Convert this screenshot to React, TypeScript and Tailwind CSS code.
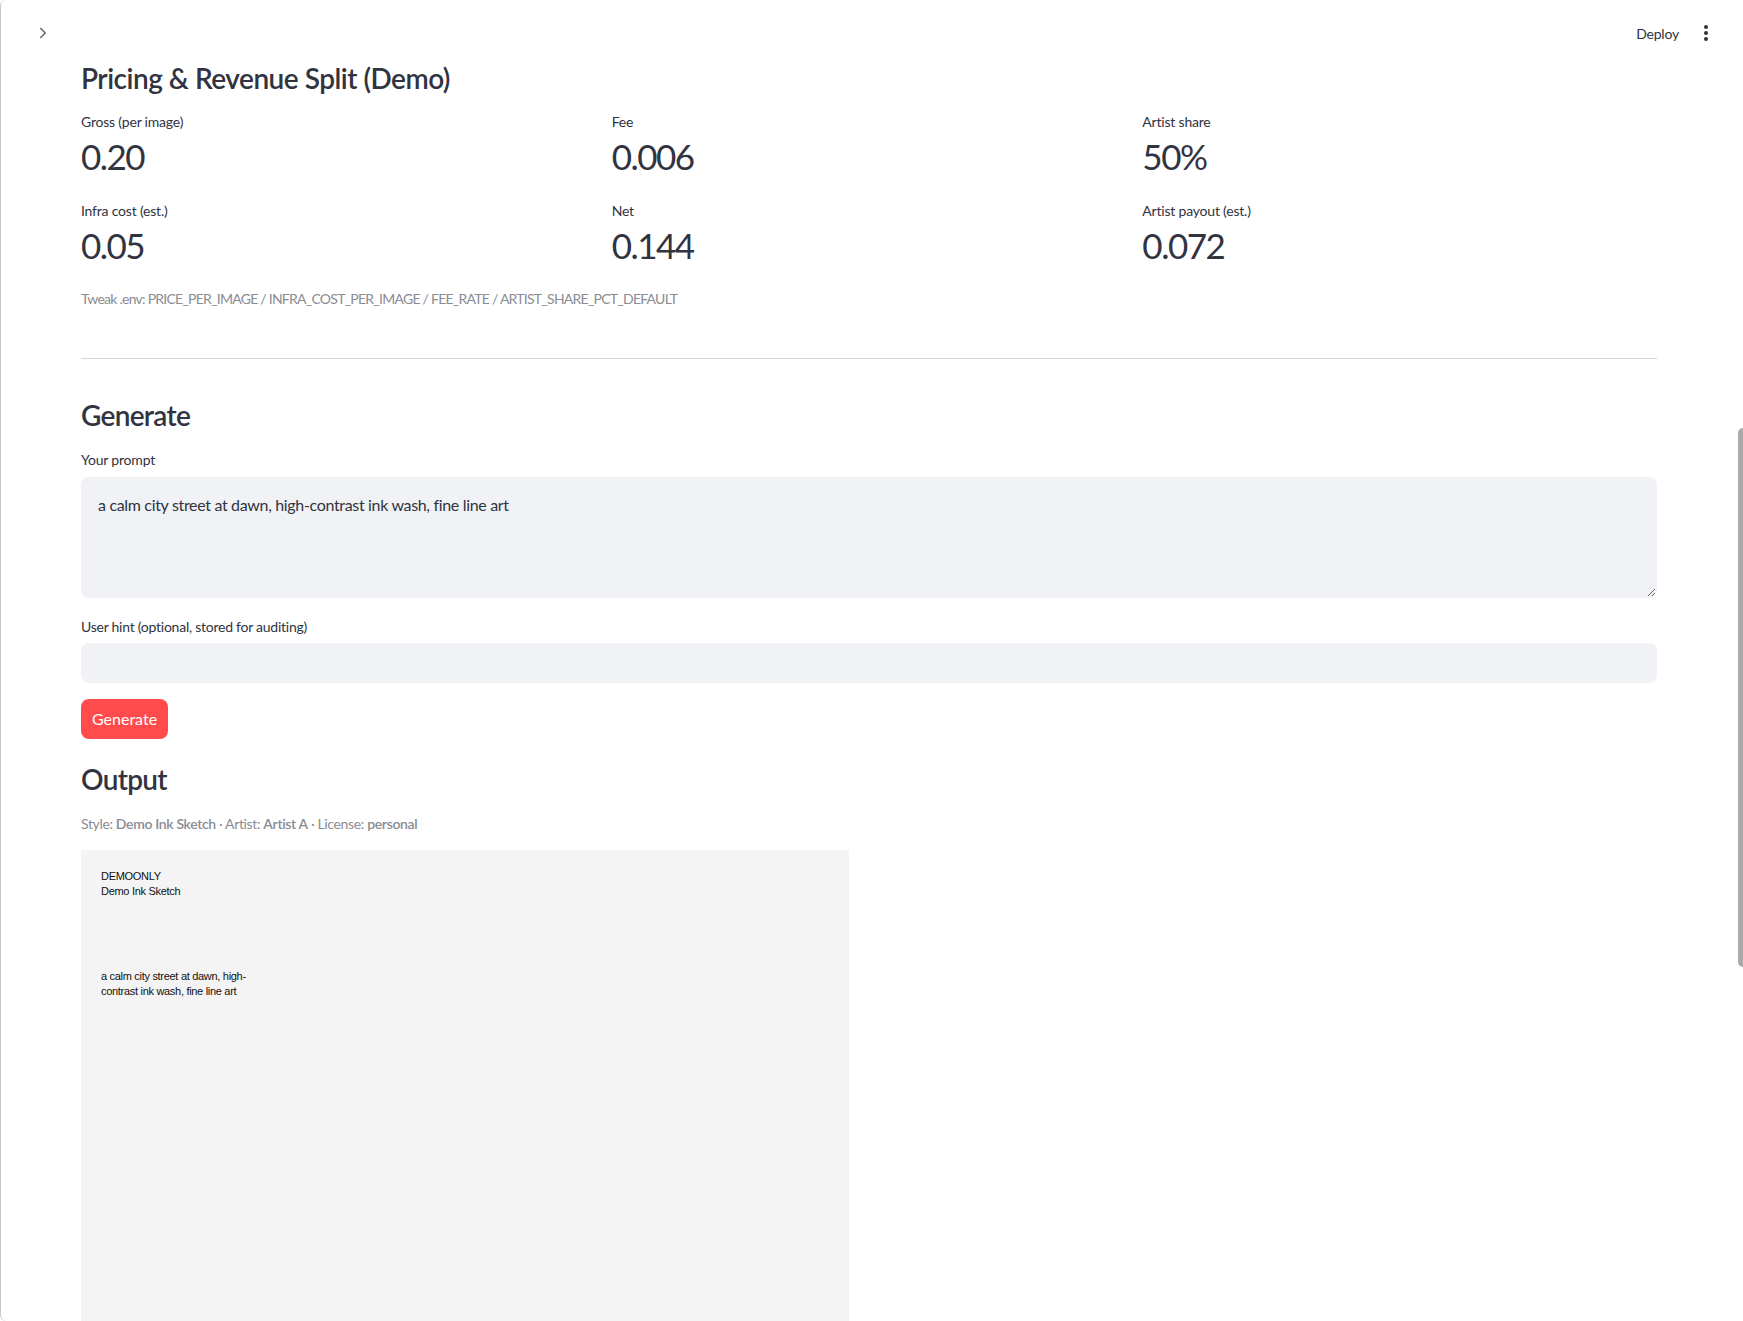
import React from 'react';
import { ChevronRight } from 'lucide-react';

const font = { fontFamily: 'Lato, "Noto Sans", sans-serif' };

const metrics = [
  { label: 'Gross (per image)', value: '0.20' },
  { label: 'Fee', value: '0.006' },
  { label: 'Artist share', value: '50%' },
  { label: 'Infra cost (est.)', value: '0.05' },
  { label: 'Net', value: '0.144' },
  { label: 'Artist payout (est.)', value: '0.072' },
];

const Metric: React.FC<{ label: string; value: string }> = ({ label, value }) => (
  <div className="flex flex-col">
    <div className="text-[14px] leading-[20px] tracking-[-0.2px] text-[#31333f]">{label}</div>
    <div className="mt-[2px] text-[35px] leading-[44px] tracking-[-1.5px] text-[#31333f]">{value}</div>
  </div>
);

const App: React.FC = () => {
  return (
    <div
      className="relative h-[1321px] overflow-hidden bg-white border-l border-[#c8c8c8] rounded-l-[6px] text-[#31333f]"
      style={font}
    >
      {/* top bar */}
      <header className="absolute top-0 left-0 right-0 h-[66px] flex items-center justify-between pl-[33px] pr-[34px]">
        <ChevronRight className="w-[18px] h-[18px] text-[#6b6d76]" strokeWidth={2.2} />
        <div className="flex items-center gap-[24px]">
          <span className="text-[14px] tracking-[-0.2px] text-[#31333f]">Deploy</span>
          <svg width="6" height="18" viewBox="0 0 6 18" className="text-[#31333f]">
            <circle cx="3" cy="3" r="2" fill="currentColor" />
            <circle cx="3" cy="9" r="2" fill="currentColor" />
            <circle cx="3" cy="15" r="2" fill="currentColor" />
          </svg>
        </div>
      </header>

      {/* scrollbar */}
      <div className="absolute right-0 top-[428px] w-[5px] h-[539px] rounded-l-full bg-[#a9a9ae]" />

      <main className="pl-[80px] pr-[86px] pt-[61px]">
        <h3 className="text-[28px] leading-[34px] font-semibold tracking-[-0.5px]">Pricing &amp; Revenue Split (Demo)</h3>

        <div className="mt-[17px] grid grid-cols-3 gap-x-[16px] gap-y-[23px]">
          {metrics.map((m) => (
            <Metric key={m.label} label={m.label} value={m.value} />
          ))}
        </div>

        <p className="mt-[22px] text-[14px] leading-[20px] tracking-[-0.75px] text-[#8a8c93]">
          Tweak .env: PRICE_PER_IMAGE / INFRA_COST_PER_IMAGE / FEE_RATE / ARTIST_SHARE_PCT_DEFAULT
        </p>

        <hr className="mt-[49px] border-0 border-t border-[#d6d6d9]" />

        <h3 className="mt-[39px] text-[28px] leading-[34px] font-semibold tracking-[-0.7px]">Generate</h3>

        <label className="block mt-[18px] text-[14px] leading-[20px] tracking-[-0.2px]">Your prompt</label>
        <textarea
          className="mt-[7px] block w-full h-[121px] rounded-[8px] bg-[#f0f2f6] border border-transparent px-[16px] pt-[15px] text-[16px] leading-[24px] tracking-[-0.33px] text-[#31333f] outline-none resize-y"
          style={font}
          defaultValue="a calm city street at dawn, high-contrast ink wash, fine line art"
        />

        <label className="block mt-[19px] text-[14px] leading-[20px] tracking-[-0.25px]">
          User hint (optional, stored for auditing)
        </label>
        <input
          className="mt-[6px] block w-full h-[40px] rounded-[8px] bg-[#f0f2f6] border border-transparent px-[16px] text-[16px] outline-none"
          style={font}
        />

        <button className="mt-[16px] h-[40px] px-[11px] rounded-[8px] bg-[#ff4b4b] text-white text-[16px]">
          Generate
        </button>

        <h3 className="mt-[23px] text-[28px] leading-[34px] font-semibold tracking-[-0.7px]">Output</h3>

        <p className="mt-[18px] text-[14px] leading-[20px] tracking-[-0.35px] text-[#8a8c93]">
          Style: <b className="font-semibold">Demo Ink Sketch</b> · Artist: <b className="font-semibold">Artist A</b> · License:{' '}
          <b className="font-semibold">personal</b>
        </p>

        <div
          className="mt-[16px] w-[768px] h-[768px] bg-[#f4f4f4] pl-[20px] pt-[19px] text-[11px] leading-[14.5px] text-[#111] tracking-[-0.3px]"
          style={{ fontFamily: '"Liberation Sans", Arial, sans-serif' }}
        >
          <div>DEMOONLY</div>
          <div>Demo Ink Sketch</div>
          <div className="mt-[71px]">
            a calm city street at dawn, high-
            <br />
            contrast ink wash, fine line art
          </div>
        </div>
      </main>
    </div>
  );
};

export default App;
